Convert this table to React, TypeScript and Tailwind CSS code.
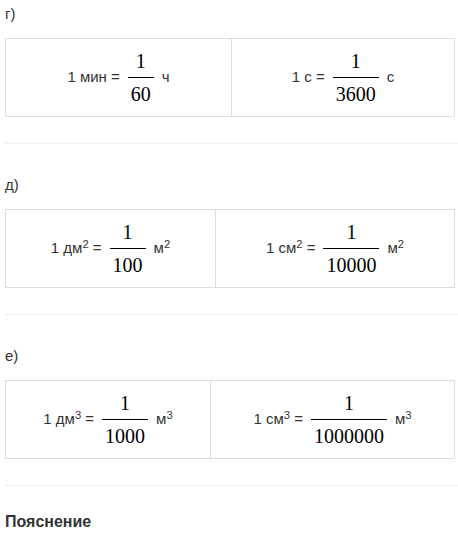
import type { ReactNode } from "react";

function Frac({ num, den }: { num: string; den: string }) {
  return (
    <span className="mx-[8px] inline-flex flex-col items-center font-['Liberation_Serif',serif] text-[20px] leading-6 text-black">
      <span className="px-[3px] pb-1">{num}</span>
      <span className="border-t border-black px-[3px] pt-1">{den}</span>
    </span>
  );
}

function Cell({ left, frac, right, divider }: { left: ReactNode; frac: [string, string]; right: ReactNode; divider?: boolean }) {
  return (
    <div className={`flex h-[77px] items-center justify-center ${divider ? "border-r border-[#ddd]" : ""}`}>
      <span className="whitespace-nowrap">{left}</span>
      <Frac num={frac[0]} den={frac[1]} />
      <span className="whitespace-nowrap">{right}</span>
    </div>
  );
}

const sections = [
  {
    label: "г)",
    cols: "grid-cols-[226px_1fr]",
    cells: [
      { left: "1 мин =", frac: ["1", "60"] as [string, string], right: "ч" },
      { left: "1 с =", frac: ["1", "3600"] as [string, string], right: "с" },
    ],
  },
  {
    label: "д)",
    cols: "grid-cols-[210px_1fr]",
    cells: [
      { left: <>1 дм<sup>2</sup> =</>, frac: ["1", "100"] as [string, string], right: <>м<sup>2</sup></> },
      { left: <>1 см<sup>2</sup> =</>, frac: ["1", "10000"] as [string, string], right: <>м<sup>2</sup></> },
    ],
  },
  {
    label: "е)",
    cols: "grid-cols-[205px_1fr]",
    cells: [
      { left: <>1 дм<sup>3</sup> =</>, frac: ["1", "1000"] as [string, string], right: <>м<sup>3</sup></> },
      { left: <>1 см<sup>3</sup> =</>, frac: ["1", "1000000"] as [string, string], right: <>м<sup>3</sup></> },
    ],
  },
];

export default function App() {
  return (
    <div className="bg-white pl-[5px] font-['Liberation_Sans',Arial,sans-serif] text-[15px] text-[#333]">
      {sections.map((s, i) => (
        <div key={i} className={i > 0 ? "border-t border-[#eee] pt-[30px]" : "pt-[3px]"}>
          <p className="leading-[22px]">{s.label}</p>
          <div className={`mt-[13px] mb-[26px] grid w-[450px] border border-[#ddd] ${s.cols}`}>
            {s.cells.map((c, j) => (
              <Cell key={j} left={c.left} frac={c.frac} right={c.right} divider={j === 0} />
            ))}
          </div>
        </div>
      ))}
      <div className="border-t border-[#eee] pt-[24px]">
        <p className="text-[16px] font-bold leading-6">Пояснение</p>
      </div>
    </div>
  );
}
